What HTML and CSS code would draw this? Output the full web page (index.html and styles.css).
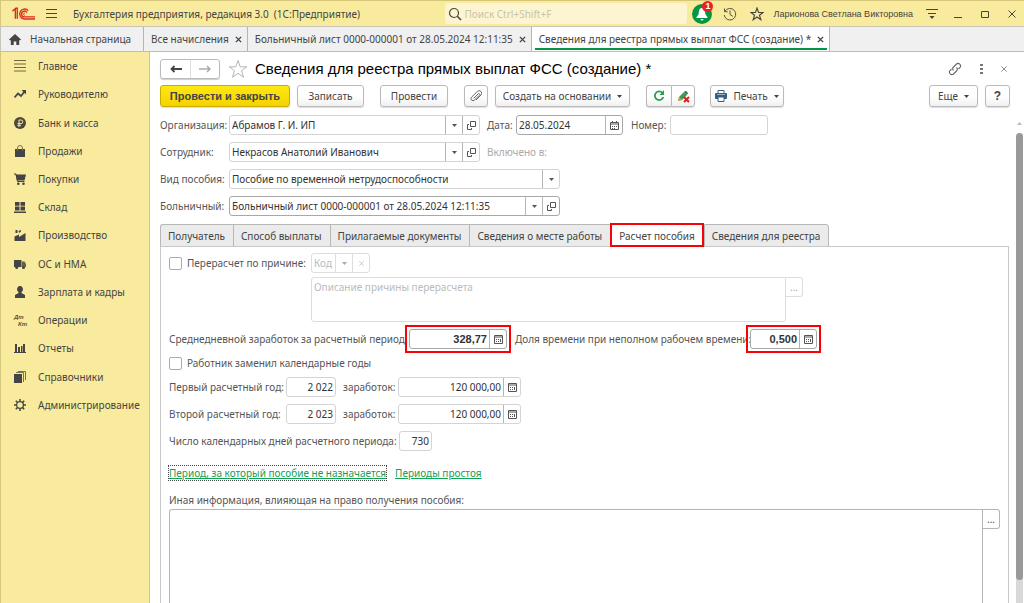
FILE: index.html
```html
<!DOCTYPE html>
<html lang="ru">
<head>
<meta charset="utf-8">
<meta name="viewport" content="width=device-width, initial-scale=1">
<title>Сведения для реестра прямых выплат ФСС (создание)</title>
<link rel="stylesheet" href="styles.css">
</head>
<body>
<svg class="sprite" aria-hidden="true">
  <symbol id="i-caret" viewBox="0 0 5 3"><path d="M0 0h5L2.500 3z" fill="currentColor"/></symbol>
  <symbol id="i-open" viewBox="0 0 9 9"><path d="M3.500.5h5v5h-5zM2 3.500H.5v5h4V7" fill="none" stroke="currentColor"/></symbol>
  <symbol id="i-calc" viewBox="0 0 9 9"><path d="M.5.5h8v8h-8zM1 2h7" fill="none" stroke="currentColor"/><path d="M2 4h1v1H2zM4 4h1v1H4zM6 4h1v3H6zM2 6h1v1H2zM4 6h1v1H4z" fill="currentColor"/></symbol>
  <symbol id="i-cal" viewBox="0 0 9 9"><path d="M.5 1.500h8v7h-8zM1 3h7M2.500 0v2M6.500 0v2" fill="none" stroke="currentColor"/><path d="M2 5h1v1H2zM4 5h1v1H4zM6 5h1v1H6zM2 7h1v1H2zM4 7h1v1H4z" fill="currentColor"/></symbol>
  <symbol id="i-x" viewBox="0 0 8 8"><path d="M1 1l6 6M7 1L1 7" fill="none" stroke="currentColor" stroke-width="1.600"/></symbol>
  <symbol id="i-xthin" viewBox="0 0 8 8"><path d="M.5.5l7 7M7.500.5l-7 7" fill="none" stroke="currentColor"/></symbol>
  <symbol id="i-star" viewBox="0 0 20 20"><path d="M10 1.500l2.200 6.300h6.500l-5.200 3.900 2 6.500L10 14.300l-5.500 3.900 2-6.500L1.300 7.800h6.500z" fill="none" stroke="currentColor" stroke-width="var(--star-line, 1)"/></symbol>
</svg>

<div class="app">
  <header class="titlebar">
    <svg class="logo" viewBox="0 0 25 14" role="img" aria-label="1С"><g fill="none" stroke="#dc2a20"><path d="M.5 4L3.500 1.500V12M5.500 12V1H3.500" stroke-width="1.400"/><path d="M17 3.500A5.200 5.200 0 1 0 13 12.200H24M15.500 5.500A3 3 0 1 0 13 10H24" stroke-width="1.400"/><path d="M13.500 6.300a1 1 0 1 0 0 1.600" stroke-width="1"/></g></svg>
    <button class="plain menu" aria-label="Главное меню"><svg width="11" height="10" viewBox="0 0 11 10"><path d="M0 .5h11M0 4.500h11M0 8.500h11" stroke="#4a4638"/></svg></button>
    <span class="product">Бухгалтерия предприятия, редакция 3.0&nbsp; (1С:Предприятие)</span>
    <label class="search">
      <svg width="14" height="14" viewBox="0 0 14 14"><circle cx="6" cy="6" r="4.500" fill="none" stroke="#444" stroke-width="1.200"/><path d="M9.300 9.300L13 13" stroke="#444" stroke-width="1.600"/></svg>
      <input type="search" placeholder="Поиск Ctrl+Shift+F" aria-label="Поиск">
    </label>
    <div class="title-tools">
      <button class="plain bell" aria-label="Уведомления"><svg width="20" height="20" viewBox="0 0 20 20"><circle cx="10" cy="10" r="10" fill="#079443"/><path d="M10 4c-3 0-3 3-3.400 6-.2 1.500-2.300 2.500-2.300 4h11.400c0-1.500-2.100-2.500-2.300-4C13 7 13 4 10 4zM8.500 15h3a1.500 1.500 0 0 1-3 0z" fill="#fff"/></svg><span class="badge">1</span></button>
      <button class="plain" aria-label="История"><svg width="14" height="14" viewBox="0 0 14 14"><g fill="none" stroke="#57523f"><path d="M2 4.200A5.800 5.800 0 1 1 1.200 8M7 3.500V7.500L9.800 9.300"/><path d="M1.500 1.500v3.200h3.200"/></g></svg></button>
      <button class="plain" aria-label="Избранное"><svg class="fav" width="14" height="14"><use href="#i-star"/></svg></button>
      <a class="user" href="#">Ларионова Светлана Викторовна</a>
      <button class="plain" aria-label="Настройки"><svg width="12" height="11" viewBox="0 0 12 11"><path d="M0 1.500h12M2 5.500h8" stroke="#4a4638"/><path d="M3.500 8h5L6 11z" fill="#4a4638"/></svg></button>
      <button class="plain win" aria-label="Свернуть"><svg width="8" height="8" viewBox="0 0 8 8"><path d="M0 7.500h8" stroke="#444"/></svg></button>
      <button class="plain win" aria-label="Развернуть"><svg width="8" height="8" viewBox="0 0 8 8"><path d="M.5 1.500h7v6h-7z" fill="none" stroke="#444"/></svg></button>
      <button class="plain win" aria-label="Закрыть"><svg width="8" height="8"><use href="#i-xthin"/></svg></button>
    </div>
  </header>

  <nav class="windows" aria-label="Открытые окна">
    <a class="window home" href="#"><svg width="12" height="11" viewBox="0 0 12 11"><path d="M6 0l6 5.500-1 1-.8-.7V11H7.300V7.500H4.700V11H1.800V5.800l-.8.7-1-1z" fill="#444"/></svg>Начальная страница</a>
    <div class="window"><a href="#">Все начисления</a><button class="plain" aria-label="Закрыть"><svg width="7" height="7"><use href="#i-x"/></svg></button></div>
    <div class="window"><a href="#">Больничный лист 0000-000001 от 28.05.2024 12:11:35</a><button class="plain" aria-label="Закрыть"><svg width="7" height="7"><use href="#i-x"/></svg></button></div>
    <div class="window current"><a href="#" aria-current="page">Сведения для реестра прямых выплат ФСС (создание) *</a><button class="plain" aria-label="Закрыть"><svg width="7" height="7"><use href="#i-x"/></svg></button></div>
  </nav>

  <div class="workspace">
    <nav class="sidebar" aria-label="Разделы">
      <div class="sections">
      <a href="#"><svg viewBox="0 0 12 12"><path d="M0 .5h12M0 4h12M0 7.500h12M0 11h12" stroke="#6c6648"/></svg>Главное</a>
      <a href="#"><svg viewBox="0 0 12 12"><path d="M.5 9.500L4 5.500l3 2.500 4-5" fill="none" stroke="#444" stroke-width="1.800"/><path d="M7.500 2H12v4.500z" fill="#444"/></svg>Руководителю</a>
      <a href="#"><svg viewBox="0 0 12 12"><circle cx="6" cy="6" r="6" fill="#4b4940"/><path d="M5 10V3h2a1.800 1.800 0 0 1 0 3.600H3.500M3.500 8.300H7" fill="none" stroke="#f9eb9d"/></svg>Банк и касса</a>
      <a href="#"><svg viewBox="0 0 12 12"><path d="M1 4h10v8H1z" fill="#444"/><path d="M3.500 6V3a2.500 2.500 0 0 1 5 0v3" fill="none" stroke="#777154"/></svg>Продажи</a>
      <a href="#"><svg viewBox="0 0 12 12"><path d="M1.500 1.500H12L10.500 7.500H3z" fill="#444"/><path d="M0 1h2l1.500 7.500h7" fill="none" stroke="#444"/><circle cx="4.300" cy="10.700" r="1.300" fill="#444"/><circle cx="9.500" cy="10.700" r="1.300" fill="#444"/></svg>Покупки</a>
      <a href="#"><svg viewBox="0 0 12 12"><path d="M1 1h4.500v3.800H1zM6.500 1H11v3.800H6.500zM1 5.600h4.500v3.800H1zM6.500 5.600H11v3.800H6.500zM0 10.400h12V12H0z" fill="#444"/></svg>Склад</a>
      <a href="#"><svg viewBox="0 0 12 12"><path d="M.5 12V7.500L5 5.500v2.500L11.500 4v8zM1.500 1h2v3h-2zM4.500 2L7 1v1.500L5 4z" fill="#444"/></svg>Производство</a>
      <a href="#"><svg viewBox="0 0 12 12"><path d="M0 2h7.500v7H0z" fill="#444"/><path d="M8 3.500h2.500L12 6v3H8z" fill="#666147"/><circle cx="2.700" cy="9.500" r="1.500" fill="#444"/><circle cx="9.500" cy="9.500" r="1.500" fill="#444"/></svg>ОС и НМА</a>
      <a href="#"><svg viewBox="0 0 12 12"><path d="M6 0a2.700 3.200 0 0 1 1.500 6v1L11 9v3H1V9l3.500-2V6A2.700 3.200 0 0 1 6 0z" fill="#444"/></svg>Зарплата и кадры</a>
      <a href="#"><svg class="dtkt" viewBox="0 0 12 12"><text x="0" y="5">Дт</text><text x="4" y="12">Кт</text></svg>Операции</a>
      <a href="#"><svg viewBox="0 0 12 12"><path d="M1 2h2v8H1zM4 5h2v5H4zM7 4h1.500v6H7zM9 2h2v8H9zM0 10h12v1H0z" fill="#444"/></svg>Отчеты</a>
      <a href="#"><svg viewBox="0 0 12 12"><path d="M0 3h8v9H0z" fill="#444"/><path d="M2 1.500h7.500V11M4 .5h7.500V9" fill="none" stroke="#777154"/></svg>Справочники</a>
      <a href="#"><svg viewBox="0 0 12 12"><circle cx="6" cy="6" r="3.400" fill="none" stroke="#444" stroke-width="1.300"/><path d="M6 0v2.300M6 9.700V12M0 6h2.300M9.700 6H12M1.800 1.800l1.600 1.600M8.600 8.600l1.600 1.600M1.800 10.200l1.600-1.600M8.600 3.400l1.600-1.600" stroke="#444" stroke-width="1.500"/></svg>Администрирование</a>
      </div>
    </nav>

    <main class="document">
      <div class="heading">
        <div class="history">
          <button aria-label="Назад"><svg width="12" height="8" viewBox="0 0 12 8"><path d="M12 4H1.500M4.500 1l-3 3 3 3" fill="none" stroke="#444" stroke-width="1.800"/></svg></button>
          <button aria-label="Вперед"><svg width="12" height="8" viewBox="0 0 12 8"><path d="M0 4h11M8 1l3 3-3 3" fill="none" stroke="#aaa" stroke-width="1.500"/></svg></button>
        </div>
        <button class="plain bookmark" aria-label="В избранное"><svg width="20" height="20"><use href="#i-star"/></svg></button>
        <h1>Сведения для реестра прямых выплат ФСС (создание) *</h1>
        <div class="heading-tools">
          <button class="plain" aria-label="Ссылка"><svg width="14" height="14" viewBox="0 0 14 14"><g fill="none" stroke="#666" stroke-width="1.100"><path d="M5.500 8.500a2.500 2.500 0 0 1 0-3.500l3-3a2.500 2.500 0 0 1 3.500 3.500L10.500 7M8.500 5.500a2.500 2.500 0 0 1 0 3.500l-3 3A2.500 2.500 0 0 1 2 8.500L3.500 7"/></g></svg></button>
          <button class="plain" aria-label="Действия"><svg width="3" height="10" viewBox="0 0 3 10"><path d="M0 0h3v2H0zM0 4h3v2H0zM0 8h3v2H0z" fill="#777"/></svg></button>
          <button class="plain" aria-label="Закрыть"><svg width="6" height="6"><use href="#i-xthin"/></svg></button>
        </div>
      </div>

      <div class="toolbar">
        <button class="btn primary">Провести и закрыть</button>
        <button class="btn save">Записать</button>
        <button class="btn post">Провести</button>
        <button class="btn icon attach" aria-label="Файлы"><svg width="12" height="12" viewBox="0 0 12 12"><path d="M3.500 8.500l4.800-4.800a1 1 0 0 1 1.300 1.400L4.500 10a2 2 0 0 1-3-2.800l5.800-5.700a2.500 2.500 0 0 1 3.700 3.600L6 10" fill="none" stroke="#666"/></svg></button>
        <button class="btn base">Создать на основании<svg width="5" height="3"><use href="#i-caret"/></svg></button>
        <div class="pair">
          <button class="btn icon" aria-label="Обновить"><svg width="12" height="12" viewBox="0 0 12 12"><path d="M9.500 3A4.300 4.300 0 1 0 10.300 7" fill="none" stroke="#2ba148" stroke-width="1.800"/><path d="M11 0v5H6.500z" fill="#2ba148"/></svg></button>
          <button class="btn icon" aria-label="Отменить правку"><svg width="13" height="13" viewBox="0 0 13 13"><path d="M1 11l1-4 5-5 3 3-5 5z" fill="#3e9b57"/><path d="M1 11l1-4 3 3z" fill="#d8a25a"/><path d="M7 2l1-1h1l2 2-1 2z" fill="#37745f"/><path d="M7 7l5 5M12 7l-5 5" stroke="#d5231d" stroke-width="2"/></svg></button>
        </div>
        <button class="btn print"><svg width="12" height="12" viewBox="0 0 12 12"><path d="M3 .5h6v3H3z" fill="#fff" stroke="#365f84"/><rect y="3" width="12" height="6" rx="1" fill="#365f84"/><path d="M3 7h6v4.500H3z" fill="#fff" stroke="#365f84"/><path d="M2 4.500h8" stroke="#9ab4ca"/></svg>Печать<svg width="5" height="3"><use href="#i-caret"/></svg></button>
        <button class="btn more">Еще<svg width="5" height="3"><use href="#i-caret"/></svg></button>
        <button class="btn help" aria-label="Справка">?</button>
      </div>

      <div class="body">
        <form class="form">
          <div class="row">
            <label class="caption" for="org">Организация:</label>
            <div class="field medium"><select id="org"><option>Абрамов Г. И. ИП</option></select><span class="cell"><svg width="5" height="3"><use href="#i-caret"/></svg></span><button type="button" class="cell" aria-label="Открыть"><svg width="9" height="9"><use href="#i-open"/></svg></button></div>
            <label class="date-label" for="date">Дата:</label>
            <div class="field dark date"><input id="date" value="28.05.2024"><button type="button" class="cell" aria-label="Календарь"><svg width="9" height="9"><use href="#i-cal"/></svg></button></div>
            <label class="number-label" for="number">Номер:</label>
            <div class="field number"><input id="number"></div>
          </div>
          <div class="row">
            <label class="caption" for="person">Сотрудник:</label>
            <div class="field medium"><select id="person"><option>Некрасов Анатолий Иванович</option></select><span class="cell"><svg width="5" height="3"><use href="#i-caret"/></svg></span><button type="button" class="cell" aria-label="Открыть"><svg width="9" height="9"><use href="#i-open"/></svg></button></div>
            <span class="muted">Включено в:</span>
          </div>
          <div class="row">
            <label class="caption" for="kind">Вид пособия:</label>
            <div class="field wide"><select id="kind"><option>Пособие по временной нетрудоспособности</option></select><span class="cell"><svg width="5" height="3"><use href="#i-caret"/></svg></span></div>
          </div>
          <div class="row">
            <label class="caption" for="sheet">Больничный:</label>
            <div class="field dark wide"><select id="sheet"><option>Больничный лист 0000-000001 от 28.05.2024 12:11:35</option></select><span class="cell"><svg width="5" height="3"><use href="#i-caret"/></svg></span><button type="button" class="cell" aria-label="Открыть"><svg width="9" height="9"><use href="#i-open"/></svg></button></div>
          </div>

          <div class="tabs" role="tablist">
            <button type="button" role="tab">Получатель</button>
            <button type="button" role="tab">Способ выплаты</button>
            <button type="button" role="tab">Прилагаемые документы</button>
            <button type="button" role="tab">Сведения о месте работы</button>
            <button type="button" role="tab" class="marked" aria-selected="true">Расчет пособия</button>
            <button type="button" role="tab">Сведения для реестра</button>
          </div>

          <section class="panel" role="tabpanel">
            <div class="reason">
              <label class="check"><input type="checkbox">Перерасчет по причине:</label>
              <div class="reason-fields">
                <div class="field faint code"><input placeholder="Код" aria-label="Код причины" disabled><button type="button" class="cell" aria-label="Выбрать" disabled><svg width="5" height="3"><use href="#i-caret"/></svg></button><button type="button" class="cell" aria-label="Очистить" disabled><svg width="5" height="5"><use href="#i-xthin"/></svg></button></div>
                <div class="memo faint"><textarea placeholder="Описание причины перерасчета" aria-label="Описание причины перерасчета" disabled></textarea><button type="button" class="cell" disabled>...</button></div>
              </div>
            </div>
            <div class="row">
              <label class="average" for="avg">Среднедневной заработок за расчетный период:</label>
              <div class="field dark marked avg"><input id="avg" value="328,77"><button type="button" class="cell" aria-label="Калькулятор"><svg width="9" height="9"><use href="#i-calc"/></svg></button></div>
              <label class="share" for="part">Доля времени при неполном рабочем времени:</label>
              <div class="field dark marked part"><input id="part" value="0,500"><button type="button" class="cell" aria-label="Калькулятор"><svg width="9" height="9"><use href="#i-calc"/></svg></button></div>
            </div>
            <div class="row short"><label class="check"><input type="checkbox">Работник заменил календарные годы</label></div>
            <div class="row">
              <label class="year-label" for="y1">Первый расчетный год:</label>
              <div class="field num year"><input id="y1" value="2 022"></div>
              <label class="sum-label" for="s1">заработок:</label>
              <div class="field num sum"><input id="s1" value="120 000,00"><button type="button" class="cell" aria-label="Калькулятор"><svg width="9" height="9"><use href="#i-calc"/></svg></button></div>
            </div>
            <div class="row">
              <label class="year-label" for="y2">Второй расчетный год:</label>
              <div class="field num year"><input id="y2" value="2 023"></div>
              <label class="sum-label" for="s2">заработок:</label>
              <div class="field num sum"><input id="s2" value="120 000,00"><button type="button" class="cell" aria-label="Калькулятор"><svg width="9" height="9"><use href="#i-calc"/></svg></button></div>
            </div>
            <div class="row">
              <label class="days-label" for="days">Число календарных дней расчетного периода:</label>
              <div class="field num days"><input id="days" value="730"></div>
            </div>
            <div class="links"><a class="focused" href="#">Период, за который пособие не назначается</a><a href="#">Периоды простоя</a></div>
            <label class="info-label" for="info">Иная информация, влияющая на право получения пособия:</label>
            <div class="memo info"><textarea id="info"></textarea><button type="button" class="cell">...</button></div>
          </section>
        </form>
        <div class="scroll" aria-hidden="true"><svg width="5" height="3" viewBox="0 0 5 3"><path d="M0 3h5L2.500 0z" fill="#bbb"/></svg><div class="track"><div class="thumb"></div></div></div>
      </div>
    </main>
  </div>
</div>
</body>
</html>
```

FILE: styles.css
```css
* { box-sizing: border-box; }

body {
  margin: 0;
  font: 10px/14px "Noto Sans", Arial, sans-serif;
  color: #444;
  background: #fff;
}

button, input, select, textarea { font: inherit; color: inherit; margin: 0; }
a { color: inherit; text-decoration: none; }
svg { display: block; flex: none; }
.sprite { position: absolute; width: 0; height: 0; }

.plain {
  display: flex;
  align-items: center;
  justify-content: center;
  padding: 0;
  border: 0;
  background: none;
}

.app { display: flex; flex-direction: column; height: 100vh; overflow: hidden; }

/* Title bar */
.titlebar {
  display: flex;
  align-items: center;
  flex: none;
  height: 26px;
  padding: 0 5px 0 11px;
  background: #f9eb9d;
  border-top: 1px solid #d6c67b;
  border-left: 1px solid #d6c67b;
}
.logo { width: 24px; height: 14px; }
.menu { margin: 0 16px 0 10px; }
.product { flex: none; }
.search {
  display: flex;
  align-items: center;
  gap: 2px;
  flex: none;
  width: 242px;
  height: 21px;
  margin-left: auto;
  padding-left: 3px;
  background: #fdf5cf;
  border-radius: 3px;
}
.search input { flex: 1; min-width: 0; padding: 0; border: 0; outline: 0; background: none; }
.search input::placeholder { color: #c9c3ab; }
.title-tools { display: flex; align-items: center; gap: 13px; margin-left: 5px; color: #444; }
.bell { position: relative; margin-right: -2px; }
.badge {
  position: absolute;
  top: -3px;
  right: -1px;
  width: 11px;
  height: 11px;
  border-radius: 50%;
  background: #e62323;
  color: #fff;
  font: bold 9px/11px "Liberation Sans", Arial, sans-serif;
  text-align: center;
}
.fav { --star-line: 1.600; }
.user { font: 9px/14px "Liberation Sans", Arial, sans-serif; margin-left: -4px; }
.win { width: 14px; }

/* Open windows */
.windows {
  display: flex;
  flex: none;
  height: 26px;
  background: #f0f0f0;
  border-top: 1px solid #c9c5b4;
  border-bottom: 1px solid #bdbdbd;
  border-left: 1px solid #c9c5b4;
}
.window { display: flex; align-items: center; gap: 6px; padding: 0 5px 0 7px; border-right: 1px solid #b5b5b5; color: #444; white-space: nowrap; }
.home { gap: 9px; padding: 0 12px 0 8px; }
.current { background: linear-gradient(#009646, #009646) 3px 21px / calc(100% - 5px) 2px no-repeat #fff; }

.workspace { display: flex; flex: 1; min-height: 0; }

/* Sections */
.sidebar {
  flex: none;
  width: 150px;
  background: #f9eb9d;
  border-left: 1px solid #d6c67b;
  border-right: 1px solid #d6c67b;
}
.sections { display: grid; grid-auto-rows: 1fr; min-height: 367px; }
.sidebar a { display: flex; align-items: center; gap: 12px; padding-left: 13px; }
.sidebar svg { width: 12px; height: 12px; }
.dtkt { overflow: visible; font: italic bold 6px "Liberation Sans", Arial, sans-serif; fill: #55513f; }

/* Document */
.document { display: flex; flex-direction: column; flex: 1; min-width: 0; padding: 6px 0 0 10px; }
.heading { display: flex; align-items: center; height: 22px; }
.history { display: flex; border: 1px solid #bbb; border-radius: 3px; box-shadow: 0 1px 1px #ccc; }
.history button { display: flex; align-items: center; justify-content: center; width: 29px; height: 18px; padding: 0; border: 0; background: none; }
.history button + button { border-left: 1px solid #ddd; }
.bookmark { margin: 0 7px 0 8px; color: #b5b5b5; }
h1 { margin: 0; font: 15px/20px "Liberation Sans", Arial, sans-serif; color: #000; white-space: nowrap; }
.heading-tools { display: flex; align-items: center; gap: 18px; margin-left: auto; padding-right: 17px; color: #666; }

.toolbar { display: flex; margin-top: 5px; padding-right: 14px; }
.btn {
  display: flex;
  align-items: center;
  justify-content: center;
  gap: 6px;
  height: 22px;
  padding: 0;
  border: 1px solid #bababa;
  border-radius: 3px;
  background: linear-gradient(#fff 50%, #f0f0f0);
  box-shadow: 0 1px 1px #ddd;
  white-space: nowrap;
}
.primary {
  width: 130px;
  margin-right: 7px;
  border-color: #c9ac00;
  background: linear-gradient(#ffe812, #f5d200);
  font: bold 11px/14px "Liberation Sans", Arial, sans-serif;
}
.save { width: 67px; margin-right: 16px; }
.post { width: 68px; margin-right: 16px; }
.icon { width: 24px; }
.attach { margin-right: 7px; }
.base { width: 135px; margin-right: 16px; }
.pair { display: flex; margin-right: 15px; }
.pair .icon:first-child { width: 25px; border-radius: 3px 0 0 3px; border-right: 0; }
.pair .icon:last-child { border-radius: 0 3px 3px 0; }
.print { width: 74px; }
.more { width: 49px; margin-left: auto; margin-right: 7px; }
.help { width: 25px; font: bold 12px/14px "Liberation Sans", Arial, sans-serif; }

.body { display: flex; flex: 1; min-height: 0; margin-top: 8px; }
.form { display: flex; flex-direction: column; flex: 1; min-width: 0; }
.row { display: flex; align-items: center; min-height: 20px; margin-bottom: 7px; color: #555; white-space: nowrap; }
.row.short { min-height: 14px; }
.caption { width: 69px; }

.field { display: flex; flex: none; height: 20px; border: 1px solid #d4d4d4; border-radius: 3px; color: #333; background: #fff; }
.field input, .field select {
  flex: 1;
  width: 0;
  min-width: 0;
  padding: 0 2px;
  border: 0;
  outline: 0;
  background: none;
  appearance: none;
}
.cell {
  display: flex;
  align-items: center;
  justify-content: center;
  flex: none;
  width: 17px;
  padding: 0;
  border: 0;
  border-left: 1px solid #b5b5b5;
  background: none;
  color: #555;
}
.dark { border-color: #a8a8a8; }
.faint, .faint .cell { border-color: #ddd; color: #aaa; }
.faint ::placeholder { color: #bbb; }
.medium { width: 251px; margin-right: 7px; }
.wide { width: 331px; }
.date-label { width: 29px; }
.date { width: 107px; margin-right: 8px; }
.number-label { width: 39px; }
.number { width: 98px; }
.muted { color: #aaa; }

.tabs { display: flex; flex: none; margin: 1px 0 -1px; }
.tabs button {
  height: 23px;
  padding: 0 8px 0 7px;
  border: 1px solid #b8b8b8;
  border-right: 0;
  background: #ebebeb;
  white-space: nowrap;
}
.tabs button:first-child { border-radius: 3px 0 0 0; }
.tabs button:last-child { border-right: 1px solid #b8b8b8; border-radius: 0 3px 0 0; }
.tabs [aria-selected] { background: #fff; border: 0; padding: 0 9px; }

.marked { position: relative; }
.marked::after { content: ""; position: absolute; border: 2px solid #fb0007; inset: -5px; pointer-events: none; }
.tabs .marked::after { inset: -1px 0 0; }

.panel {
  display: flex;
  flex-direction: column;
  flex: 1;
  min-height: 0;
  padding: 6px 8px 0;
  border: 1px solid #c8c8c8;
  border-bottom: 0;
}
.reason { display: flex; align-items: flex-start; margin-bottom: 7px; }
.reason .check { width: 142px; }
.check { display: flex; align-items: center; gap: 5px; height: 20px; color: #555; white-space: nowrap; }
.short .check { height: 14px; }
.check input { appearance: none; width: 13px; height: 13px; border: 1px solid #aaa; border-radius: 2px; background: #fff; }
.code { width: 59px; margin-bottom: 4px; }
.memo { display: flex; align-items: flex-start; }
.memo textarea { width: 475px; height: 45px; padding: 2px; border: 1px solid #ddd; border-radius: 3px 0 3px 3px; resize: none; outline: 0; background: #fff; }
.memo .cell { height: 20px; border: 1px solid #ddd; border-left: 0; border-radius: 0 3px 3px 0; }

.average { width: 240px; }
.avg { width: 98px; margin-right: 8px; }
.share { width: 235px; }
.part { width: 67px; }
.avg input, .part input { text-align: right; font: bold 11px/14px "Liberation Sans", Arial, sans-serif; }
.num input { text-align: right; }
.year-label { width: 117px; }
.year { width: 50px; margin-right: 7px; }
.sum-label { width: 55px; }
.sum { width: 123px; }
.days-label { width: 230px; }
.days { width: 33px; }

.links { display: flex; gap: 9px; margin: 8px 0 13px; color: #12a055; white-space: nowrap; }
.links a { text-decoration: underline; }
.focused { outline: 1px dotted #444; }
.info-label { color: #555; margin-bottom: 2px; }
.info { flex: 1; min-height: 0; }
.info textarea { flex: 1; min-width: 0; height: 100%; border-color: #b5b5b5; border-bottom: 0; border-radius: 3px 0 0; }
.info .cell { border-color: #b5b5b5; }

.scroll { display: flex; flex-direction: column; align-items: center; gap: 8px; flex: none; width: 15px; padding: 7px 0 0 5px; }
.track { flex: 1; width: 7px; border-radius: 4px 4px 0 0; background: #d8d8d8; }
.thumb { height: 95%; border-radius: 4px; background: #999; }
```
